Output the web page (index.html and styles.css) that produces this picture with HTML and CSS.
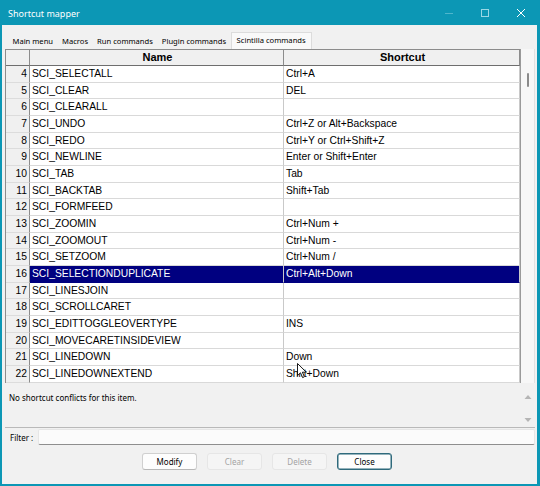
FILE: index.html
```html
<!DOCTYPE html>
<html lang="en">
<head>
  <meta charset="UTF-8" />
  <title>Shortcut mapper</title>
  <link rel="stylesheet" href="styles.css">
</head>
<body>
  <div class="window">
    <div class="titlebar">
      <span class="title">Shortcut mapper</span>
      <div class="controls">
        <div class="ctl ctl-min">
          <svg width="10" height="10" viewBox="0 0 10 10"><line x1="1" y1="5.5" x2="9" y2="5.5" stroke="#4fb6cc" stroke-width="1"/></svg>
        </div>
        <div class="ctl">
          <svg width="10" height="10" viewBox="0 0 10 10"><rect x="1.5" y="1.5" width="7" height="7" fill="none" stroke="#9ad7e4" stroke-width="1"/></svg>
        </div>
        <div class="ctl">
          <svg width="10" height="10" viewBox="0 0 10 10"><path d="M1 1 L9 9 M9 1 L1 9" stroke="#ffffff" stroke-width="1"/></svg>
        </div>
      </div>
    </div>

    <div class="content">
      <div class="tabs">
        <div class="tab">Main menu</div>
        <div class="tab">Macros</div>
        <div class="tab">Run commands</div>
        <div class="tab">Plugin commands</div>
        <div class="tab active">Scintilla commands</div>
      </div>

      <div class="grid-wrap">
        <div class="grid">
          <div class="row head">
            <div class="cell num"></div>
            <div class="cell">Name</div>
            <div class="cell">Shortcut</div>
          </div>
          <div class="row"><div class="cell num">4</div><div class="cell">SCI_SELECTALL</div><div class="cell">Ctrl+A</div></div>
          <div class="row"><div class="cell num">5</div><div class="cell">SCI_CLEAR</div><div class="cell">DEL</div></div>
          <div class="row"><div class="cell num">6</div><div class="cell">SCI_CLEARALL</div><div class="cell"></div></div>
          <div class="row"><div class="cell num">7</div><div class="cell">SCI_UNDO</div><div class="cell">Ctrl+Z or Alt+Backspace</div></div>
          <div class="row"><div class="cell num">8</div><div class="cell">SCI_REDO</div><div class="cell">Ctrl+Y or Ctrl+Shift+Z</div></div>
          <div class="row"><div class="cell num">9</div><div class="cell">SCI_NEWLINE</div><div class="cell">Enter or Shift+Enter</div></div>
          <div class="row"><div class="cell num">10</div><div class="cell">SCI_TAB</div><div class="cell">Tab</div></div>
          <div class="row"><div class="cell num">11</div><div class="cell">SCI_BACKTAB</div><div class="cell">Shift+Tab</div></div>
          <div class="row"><div class="cell num">12</div><div class="cell">SCI_FORMFEED</div><div class="cell"></div></div>
          <div class="row"><div class="cell num">13</div><div class="cell">SCI_ZOOMIN</div><div class="cell">Ctrl+Num +</div></div>
          <div class="row"><div class="cell num">14</div><div class="cell">SCI_ZOOMOUT</div><div class="cell">Ctrl+Num -</div></div>
          <div class="row"><div class="cell num">15</div><div class="cell">SCI_SETZOOM</div><div class="cell">Ctrl+Num /</div></div>
          <div class="row selected"><div class="cell num">16</div><div class="cell">SCI_SELECTIONDUPLICATE</div><div class="cell">Ctrl+Alt+Down</div></div>
          <div class="row"><div class="cell num">17</div><div class="cell">SCI_LINESJOIN</div><div class="cell"></div></div>
          <div class="row"><div class="cell num">18</div><div class="cell">SCI_SCROLLCARET</div><div class="cell"></div></div>
          <div class="row"><div class="cell num">19</div><div class="cell">SCI_EDITTOGGLEOVERTYPE</div><div class="cell">INS</div></div>
          <div class="row"><div class="cell num">20</div><div class="cell">SCI_MOVECARETINSIDEVIEW</div><div class="cell"></div></div>
          <div class="row"><div class="cell num">21</div><div class="cell">SCI_LINEDOWN</div><div class="cell">Down</div></div>
          <div class="row"><div class="cell num">22</div><div class="cell">SCI_LINEDOWNEXTEND</div><div class="cell">Shift+Down</div></div>
        </div>
        <div class="vscroll"><div class="thumb"></div></div>
      </div>

      <div class="conflicts">
        <span>No shortcut conflicts for this item.</span>
        <div class="spin">
          <svg width="8" height="6" viewBox="0 0 8 6"><path d="M0.5 5 L4 1 L7.5 5 Z" fill="#b5b5b5"/></svg>
          <svg width="8" height="6" viewBox="0 0 8 6"><path d="M0.5 1 L4 5 L7.5 1 Z" fill="#b5b5b5"/></svg>
        </div>
      </div>

      <div class="filter-row">
        <span class="filter-label">Filter :</span>
        <div class="filter-input"></div>
      </div>

      <div class="buttons">
        <div class="btn">Modify</div>
        <div class="btn disabled">Clear</div>
        <div class="btn disabled">Delete</div>
        <div class="btn default">Close</div>
      </div>
    </div>

    <!-- mouse pointer sitting over the last row -->
    <svg class="pointer" width="11" height="16" viewBox="0 0 11 16">
      <path d="M0.5 0.5 L0.5 12.5 L3.5 9.8 L5.6 14.6 L7.4 13.8 L5.4 9.2 L9.3 9.2 Z" fill="#ffffff" stroke="#000000" stroke-width="0.9" stroke-linejoin="round"/>
    </svg>
  </div>
</body>
</html>
```

FILE: styles.css
```css
body {
  margin: 0;
  font-family: "Noto Sans", "DejaVu Sans", sans-serif;
  font-size: 8px;
  color: #000;
}

.window {
  position: relative;
  width: 540px;
  height: 486px;
  box-sizing: border-box;
  background: #0c97b5;
  padding: 0 3px 2px 2px;
  display: flex;
  flex-direction: column;
}

.titlebar {
  height: 25px;
  flex: none;
  display: flex;
  align-items: center;
  color: #fff;
}

.title {
  margin-left: 6px;
  font-size: 9px;
  margin-top: 1px;
}

.controls {
  margin-left: auto;
  margin-right: -2px;
  display: flex;
}

.ctl {
  width: 36px;
  height: 25px;
  display: flex;
  align-items: center;
  justify-content: center;
}

.ctl svg { display: block; }

.content {
  flex: 1;
  background: #f1f1f1;
  padding: 7px 0 0 3px;
  display: flex;
  flex-direction: column;
}

/* tab strip */
.tabs {
  height: 17px;
  display: flex;
  align-items: flex-end;
  padding-left: 3px;
  font-size: 7.6px;
}

.tab {
  height: 16px;
  line-height: 16px;
  padding: 0 4.5px;
  white-space: nowrap;
}

.tab.active {
  height: 17px;
  line-height: 15px;
  padding: 0 5px;
  background: #f9f9f9;
  border: 1px solid #dcdcdc;
  border-bottom: none;
  box-sizing: border-box;
}

/* grid */
.grid-wrap {
  height: 334px;
  display: flex;
  margin-right: 2px;
}

.grid {
  width: 515px;
  box-sizing: border-box;
  border-left: 1px solid #8c8c8c;
  border-top: 1px solid #8c8c8c;
  overflow: hidden;
  font-family: "Liberation Sans", Arial, sans-serif;
  font-size: 10.3px;
  background: #fff;
}

.row {
  display: grid;
  grid-template-columns: 24px 254px 236px;
  height: 16.68px;
}

.cell {
  box-sizing: border-box;
  border-right: 1px solid #c9c9c9;
  border-bottom: 1px solid #d9d9d9;
  padding-left: 2px;
  white-space: nowrap;
  overflow: hidden;
  line-height: 16px;
}

.cell.num {
  background: #f0f0f0;
  text-align: right;
  padding: 0 2px 0 0;
  border-right-color: #8c8c8c;
  border-bottom-color: #dcdcdc;
}

.row.head {
  height: 16px;
  background: #f0f0f0;
  font-weight: bold;
  font-size: 11px;
}

.row.head .cell {
  text-align: center;
  border-right-color: #8c8c8c;
  border-bottom: 1px solid #6e6e6e;
  line-height: 15px;
}

.row.selected .cell {
  background: #000080;
  color: #fff;
  border-bottom-color: #000080;
}

.row.selected .cell.num {
  background: #f0f0f0;
  color: #000;
  border-bottom-color: #dcdcdc;
}

.vscroll {
  width: 15px;
  background: #f7f7f7;
  border-left: 1px solid #9a9a9a;
  border-right: 1px solid #e2e2e2;
  box-sizing: border-box;
}

.thumb {
  width: 2px;
  height: 14px;
  margin: 24px 0 0 6px;
  border-radius: 1px;
  background: #8a8a8a;
}

/* conflicts panel */
.conflicts {
  height: 45px;
  box-sizing: border-box;
  margin-right: 2px;
  padding: 9px 0 0 4px;
  border-bottom: 1px solid #b9b9b9;
  display: flex;
}

.spin {
  margin-left: auto;
  width: 15px;
  display: flex;
  flex-direction: column;
  align-items: center;
  gap: 17px;
  padding-top: 2px;
}

.spin svg { display: block; }

/* filter */
.filter-row {
  height: 18px;
  display: flex;
  align-items: center;
  margin-right: 2px;
}

.filter-label {
  margin-left: 5px;
  width: 28px;
}

.filter-input {
  flex: 1;
  height: 16px;
  box-sizing: border-box;
  background: #fbfbfb;
  border: 1px solid #e6e6e6;
  border-bottom: 1px solid #8e8e8e;
  border-radius: 2px;
}

/* buttons */
.buttons {
  display: flex;
  justify-content: center;
  gap: 10px;
  margin-top: 7px;
  padding-right: 8px;
}

.btn {
  width: 55px;
  height: 17px;
  box-sizing: border-box;
  background: #fdfdfd;
  border: 1px solid #d0d0d0;
  border-bottom-color: #b8b8b8;
  border-radius: 3px;
  text-align: center;
  line-height: 15px;
}

.btn.disabled {
  background: #f5f5f5;
  border-color: #e6e6e6;
  color: #a3a3a3;
}

.btn.default {
  border: 1px solid #2f6a7c;
  box-shadow: inset 0 0 0 0.5px #2f6a7c;
}

.pointer {
  position: absolute;
  left: 297px;
  top: 363px;
}
```
